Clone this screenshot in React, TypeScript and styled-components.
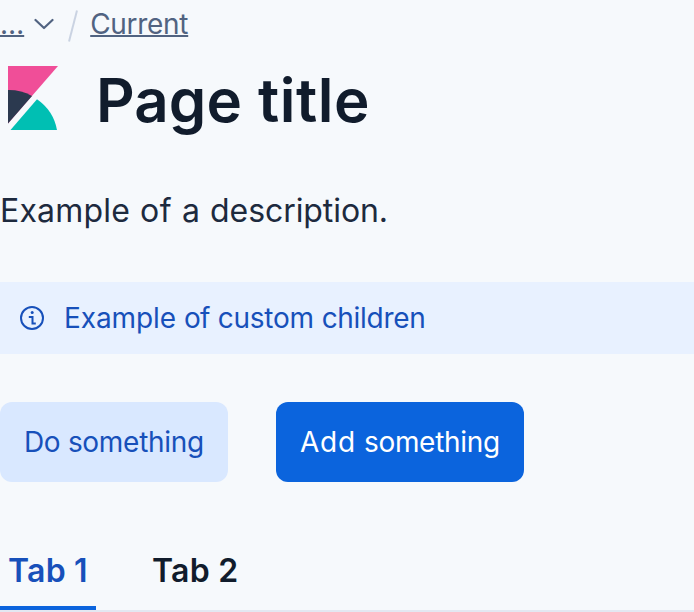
import React from 'react';
import styled, { createGlobalStyle } from 'styled-components';

const GlobalStyle = createGlobalStyle`
  *, *::before, *::after { box-sizing: border-box; }
  html, body { margin: 0; padding: 0; background: #f6f9fc; overflow: hidden; }
  body { font-family: Inter, sans-serif; color: #111c2c; }
`;

const PageHeader = styled.header`
  display: flex;
  flex-direction: column;
  width: 100%;
  height: 612px;
  overflow: hidden;
`;

const Word = styled.span<{ $track: number }>`
  letter-spacing: ${p => p.$track}px;
`;

const Breadcrumbs = styled.nav`
  display: flex;
  align-items: center;
  height: 48px;
  font-size: 28px;
  line-height: 48px;
  color: #516381;
`;

const Crumb = styled.a<{ $track?: number }>`
  color: inherit;
  letter-spacing: ${p => p.$track ?? 0}px;
  text-decoration: underline;
  text-decoration-thickness: 2px;
`;

const Chevron = styled.svg`
  width: 20px;
  height: 12px;
  margin-left: 10px;
`;

const Separator = styled.svg`
  width: 12px;
  height: 32px;
  margin: 4px 11px 0 13px;
`;

const TitleRow = styled.div`
  display: flex;
  align-items: center;
  gap: 32px;
  height: 104px;
`;

const Logo = styled.svg`
  width: 64px;
  height: 64px;
  margin-bottom: 4px;
`;

const Title = styled.h1`
  margin: 0;
  font-size: 60px;
  font-weight: 600;
  line-height: 72px;
  word-spacing: 0.9px;
`;

const Description = styled.p`
  margin: 35px 0 0;
  font-size: 32px;
  line-height: 48px;
  word-spacing: 1px;
  color: #1d2a3e;
`;

const Callout = styled.div`
  display: flex;
  align-items: center;
  gap: 20px;
  height: 72px;
  margin-top: 47px;
  padding: 0 20px;
  background: #e8f1ff;
  color: #1750ba;
  font-size: 28px;
`;

const InfoIcon = styled.svg`
  width: 24px;
  height: 24px;
`;

const Actions = styled.div`
  display: flex;
  gap: 48px;
  margin-top: 48px;
`;

const Button = styled.button<{ $primary?: boolean }>`
  width: ${p => (p.$primary ? 248 : 228)}px;
  height: 80px;
  padding: 0 24px;
  border: 0;
  border-radius: 12px;
  background: ${p => (p.$primary ? '#0b64dd' : '#d9e8ff')};
  color: ${p => (p.$primary ? '#ffffff' : '#1750ba')};
  font: 400 28px/40px Inter, sans-serif;
  text-align: left;
  white-space: nowrap;
`;

const Tabs = styled.div`
  display: flex;
  gap: 48px;
  height: 80px;
  margin-top: 50px;
  border-bottom: 2px solid #e3e8f2;
`;

const Tab = styled.button<{ $active?: boolean }>`
  padding: 0 8px;
  border: 0;
  background: none;
  box-shadow: ${p => (p.$active ? 'inset 0 -4px #0b64dd' : 'none')};
  color: ${p => (p.$active ? '#1750ba' : '#111c2c')};
  font: 600 32px/78px Inter, sans-serif;
`;

export default function App() {
  return (
    <>
      <GlobalStyle />
      <PageHeader>
        <Breadcrumbs>
          <Crumb>…</Crumb>
          <Chevron viewBox="0 0 20 12" fill="none" stroke="#516381" strokeWidth="2.2">
            <path d="M1.5 2 10 10l8.5-8" strokeLinecap="round" strokeLinejoin="round" />
          </Chevron>
          <Separator viewBox="0 0 12 32" stroke="#cad3e2" strokeWidth="2">
            <path d="M10 0.5 2 31.5" />
          </Separator>
          <Crumb $track={-0.3}>Current</Crumb>
        </Breadcrumbs>
        <TitleRow>
          <Logo viewBox="0 0 64 64">
            <path fill="#f04e98" d="M8 0v57.5L58 0z" />
            <path fill="#2b394f" d="M8 24v33.5l24-27.6A48 48 0 0 0 8 24" />
            <path fill="#00bfb3" d="M37 33.3 10.5 64H57a48 48 0 0 0-20-30.7" />
          </Logo>
          <Title>
            <Word $track={0.1}>Page</Word> <Word $track={0.53}>title</Word>
          </Title>
        </TitleRow>
        <Description>
          <Word $track={0.19}>Example</Word> <Word $track={0.48}>of</Word> a{' '}
          <Word $track={-0.07}>description.</Word>
        </Description>
        <Callout>
          <InfoIcon viewBox="0 0 24 24" fill="none" stroke="#1750ba" strokeWidth="2">
            <circle cx="12" cy="12" r="11" />
            <path d="M8.8 11h3.7v6.6h3.3" />
            <circle cx="12.2" cy="6.6" r="1.5" fill="#1750ba" stroke="none" />
          </InfoIcon>
          <span>
            <Word $track={-0.09}>Example</Word> <Word $track={-0.57}>of</Word>{' '}
            <Word $track={-0.26}>custom</Word> <Word $track={-0.28}>children</Word>
          </span>
        </Callout>
        <Actions>
          <Button>
            <Word $track={-0.5}>Do</Word> <Word $track={-0.29}>something</Word>
          </Button>
          <Button $primary>
            <Word $track={0.8}>Add</Word> <Word $track={-0.29}>something</Word>
          </Button>
        </Actions>
        <Tabs>
          <Tab $active>
            <Word $track={0.3}>Tab</Word> <Word $track={0.4}>1</Word>
          </Tab>
          <Tab>
            <Word $track={0.3}>Tab</Word> 2
          </Tab>
        </Tabs>
      </PageHeader>
    </>
  );
}
